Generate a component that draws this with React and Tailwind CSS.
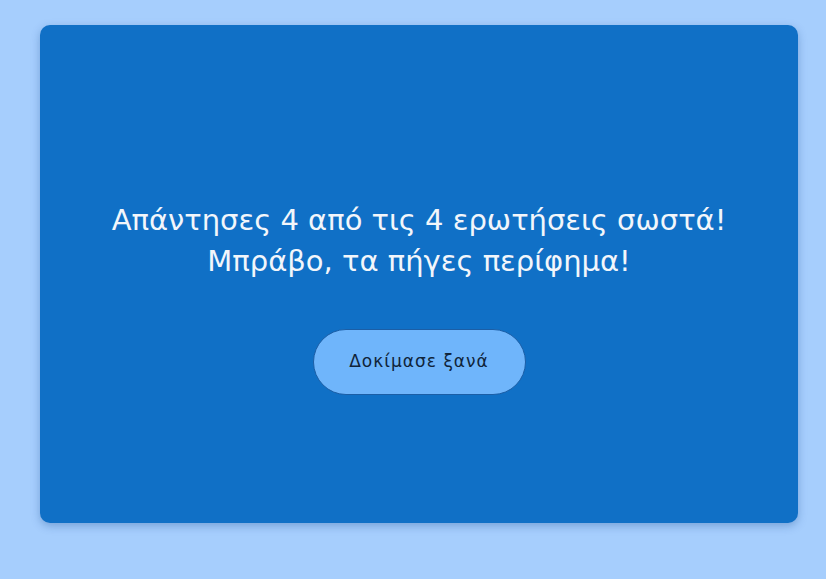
import React from "react";

export default function App() {
    return (
        <main
            className="min-h-screen w-full bg-[#a6cefd] px-[40px] pt-[25px] pb-[57px]"
            style={{ fontFamily: '"DejaVu Sans", "Noto Sans", sans-serif' }}>
            <div className="flex h-[498px] w-[758px] flex-col items-center rounded-[10px] bg-[#1070c6] pt-[175px] shadow-[0_3px_8px_rgba(30,80,150,0.35)]">
                <div className="text-center text-[29px] leading-[41px] text-[#f2f6fb]">
                    <div>Απάντησες 4 από τις 4 ερωτήσεις σωστά!</div>
                    <div>Μπράβο, τα πήγες περίφημα!</div>
                </div>
                <button
                    type="button"
                    className="mt-[47px] h-[66px] w-[213px] rounded-full border border-[#1b5ea6] bg-[#6fb5fb] text-[17px] tracking-[1px] text-[#10243a]">
                    Δοκίμασε ξανά
                </button>
            </div>
        </main>
    );
}
